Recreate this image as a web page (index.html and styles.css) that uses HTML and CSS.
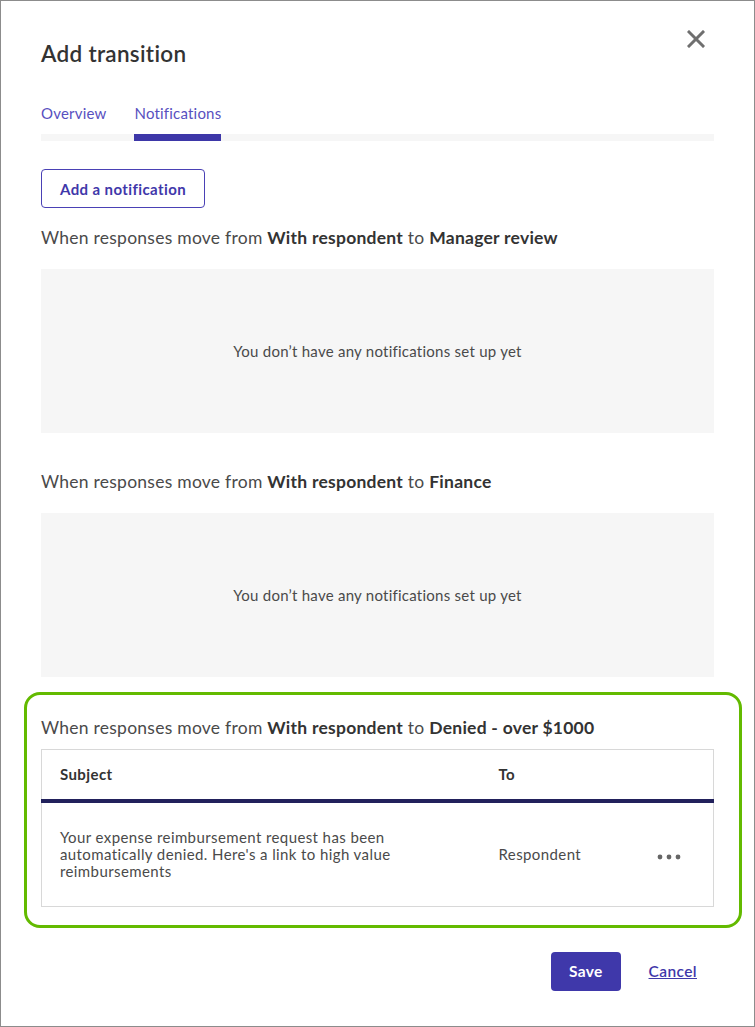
FILE: index.html
```html
<!DOCTYPE html>
<html lang="en">

<head>
    <meta charset="UTF-8">
    <meta name="viewport" content="width=device-width, initial-scale=1.0">
    <title>Add transition</title>
    <link rel="stylesheet" href="styles.css">
</head>

<body>

    <div id="dialog">
        <div id="header">
            <h1>Add transition</h1>
            <button id="close" aria-label="Close">
                <svg width="18" height="18" viewBox="0 0 18 18">
                    <path d="M2 2 L16 16 M16 2 L2 16" stroke="#6f6f6f" stroke-width="3" stroke-linecap="square" fill="none" />
                </svg>
            </button>
        </div>

        <div id="tabs">
            <a class="tab">Overview</a>
            <a class="tab active">Notifications</a>
        </div>

        <button class="outline">Add a notification</button>

        <div class="group">
            <p class="move">When responses move from <b>With respondent</b> to <b>Manager review</b></p>
            <div class="empty">You don’t have any notifications set up yet</div>
        </div>

        <div class="group">
            <p class="move">When responses move from <b>With respondent</b> to <b>Finance</b></p>
            <div class="empty">You don’t have any notifications set up yet</div>
        </div>

        <div class="group highlight">
            <p class="move">When responses move from <b>With respondent</b> to <b>Denied - over $1000</b></p>
            <table>
                <thead>
                    <tr>
                        <th class="subject">Subject</th>
                        <th class="to">To</th>
                        <th></th>
                    </tr>
                </thead>
                <tbody>
                    <tr>
                        <td class="subject">Your expense reimbursement request has been automatically denied. Here's a link to high value reimbursements</td>
                        <td class="to">Respondent</td>
                        <td class="more">
                            <svg width="24" height="6" viewBox="0 0 24 6">
                                <circle cx="3" cy="3" r="2.4" fill="#666" />
                                <circle cx="12" cy="3" r="2.4" fill="#666" />
                                <circle cx="21" cy="3" r="2.4" fill="#666" />
                            </svg>
                        </td>
                    </tr>
                </tbody>
            </table>
        </div>

        <div id="footer">
            <button class="primary">Save</button>
            <a class="cancel" href="#">Cancel</a>
        </div>
    </div>

</body>

</html>
```

FILE: styles.css
```css
html,
body {
    margin: 0;
    padding: 0;
    background-color: #ffffff;
}

body {
    font-family: 'Lato', 'Open Sans', sans-serif;
    color: #4a4a4a;
}

#dialog {
    box-sizing: border-box;
    width: 755px;
    height: 1027px;
    border: 1px solid #8c8c8c;
    padding: 0 40px;
}

#header {
    display: flex;
    justify-content: space-between;
    align-items: flex-start;
    padding-top: 38px;
}

#header h1 {
    margin: 0;
    font-size: 22.5px;
    font-weight: 600;
    letter-spacing: 0.3px;
    color: #333333;
    line-height: 30px;
}

#close {
    border: none;
    background: none;
    padding: 0;
    margin-top: -9px;
    margin-right: 9px;
    cursor: pointer;
}

#tabs {
    display: flex;
    gap: 28px;
    margin-top: 35px;
    border-bottom: 7px solid #f6f6f6;
}

.tab {
    font-size: 15px;
    letter-spacing: 0.2px;
    color: #5850c0;
    padding-bottom: 12px;
    margin-bottom: -7px;
    border-bottom: 7px solid transparent;
}

.tab.active {
    border-bottom-color: #3d37a8;
}

button {
    font-family: inherit;
}

.outline {
    margin-top: 28px;
    height: 39px;
    padding: 0 18px;
    background-color: #ffffff;
    border: 1px solid #4a41b5;
    border-radius: 4px;
    color: #3f38aa;
    font-size: 15px;
    font-weight: 700;
    letter-spacing: 0.4px;
}

.group {
    margin-top: 19px;
}

.group + .group {
    margin-top: 38px;
}

.move {
    margin: 0;
    font-size: 17.5px;
    letter-spacing: 0.25px;
    line-height: 22px;
}

.move b {
    font-weight: 700;
    color: #333333;
}

.empty {
    margin-top: 20px;
    height: 164px;
    background-color: #f6f6f6;
    display: flex;
    align-items: center;
    justify-content: center;
    font-size: 15px;
    letter-spacing: 0.25px;
}

.group.highlight {
    margin: 15px -28px 0 -17px;
    padding: 22px 25px 18px 14px;
    border: 3px solid #63ba00;
    border-radius: 16px;
}

table {
    width: 100%;
    margin-top: 10px;
    border-collapse: collapse;
    border: 1px solid #d8d8d8;
    font-size: 15px;
    letter-spacing: 0.4px;
}

th,
td {
    box-sizing: border-box;
}

th {
    text-align: left;
    font-weight: 700;
    color: #333333;
    height: 51px;
    border-bottom: 4px solid #22215c;
    padding: 0;
}

td {
    padding: 26px 0 26px;
    line-height: 17px;
    vertical-align: middle;
}

.subject {
    padding-left: 18px;
    width: 457px;
}

td.subject {
    padding-right: 105px;
}

.more {
    text-align: right;
    padding-right: 32px;
}

#footer {
    display: flex;
    justify-content: flex-end;
    align-items: center;
    gap: 28px;
    margin-top: 24px;
    padding-right: 17px;
}

.primary {
    height: 39px;
    padding: 0 18px;
    background-color: #3f38aa;
    color: #ffffff;
    border: none;
    border-radius: 4px;
    font-size: 15.5px;
    font-weight: 700;
    letter-spacing: 0.3px;
}

.cancel {
    color: #3f38aa;
    font-size: 15.5px;
    font-weight: 600;
    letter-spacing: 0.4px;
}
```
